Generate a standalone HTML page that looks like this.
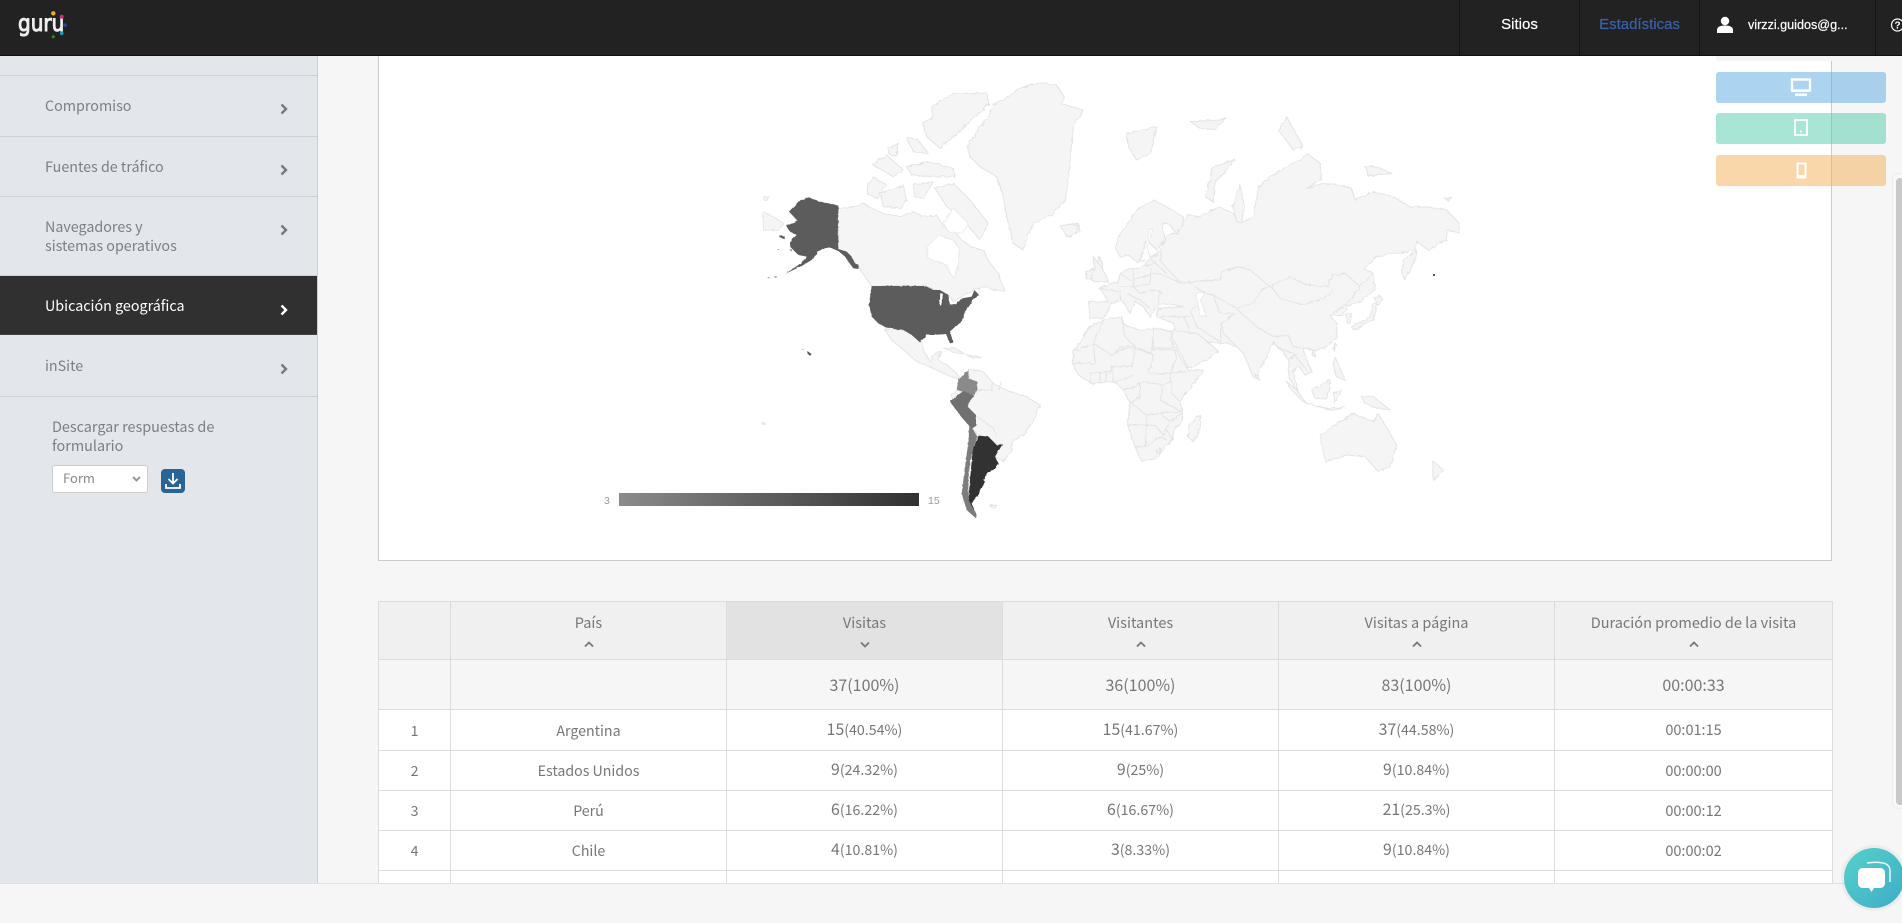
<!DOCTYPE html>
<html lang="es"><head><meta charset="utf-8"><title>Guru - Estadísticas</title>
<style>
*{box-sizing:border-box}
html,body{margin:0;padding:0;width:1902px;height:923px;overflow:hidden;background:#f6f6f6;font-family:"Noto Sans CJK SC","Liberation Sans",sans-serif;color:#777}
.abs{position:absolute}
#hdr{left:0;top:0;width:1902px;height:56px;background:#222;border-bottom:1px solid #111;font-family:"Liberation Sans",sans-serif;z-index:5}
#hdr .dv{position:absolute;top:0;height:55px;width:1px;background:#151515}
#hdr .t{position:absolute;top:0;line-height:50px;font-size:15px;text-align:center;-webkit-text-stroke:.2px}
#side{left:0;top:56px;width:318px;height:827px;background:#e3e6eb;border-right:1px solid #cdcfd2}
.ln{position:absolute;left:0;width:317px;height:1px;background:#cdd0d4}
.mi{position:absolute;left:45px;font-size:14.3px;line-height:19px;color:#7b7f86;white-space:nowrap}
.chev{position:absolute;left:280px;width:8px;height:12px}
#card{left:378px;top:50px;width:1454px;height:511px;background:#fff;border:1px solid #cbcbcb}
.dv-btn{position:absolute;left:1716px;width:170px;height:31px;border-radius:3px;z-index:3}
#tblwrap{left:378px;top:601px;width:1455px;height:282px;overflow:hidden}
table{border-collapse:collapse;table-layout:fixed;width:1454px;text-align:center}
td,th{border:1px solid #dcdcdc;padding:0;font-weight:400;color:#777;overflow:hidden;white-space:nowrap}
th{background:#f0f0f0;font-size:14.5px;height:58px;vertical-align:top;line-height:19px;padding-top:11px}
th.on{background:#e2e2e2}
th svg{display:block;margin:8.5px auto 0}
tr.tot td{background:#f6f6f6;height:50px;font-size:16px;padding-bottom:1px}
tr.r td{background:#fff;height:40px;font-size:14.2px;line-height:20px}
tr.r1 td{height:41px}
tr.r td:nth-child(1),tr.r td:nth-child(2){padding-top:1px}
tr.r td:nth-child(3),tr.r td:nth-child(4),tr.r td:nth-child(5){padding-bottom:2px}
tr.r b{font-weight:400;font-size:15.8px}
tr.r small{font-size:14.2px}
tr.r td.d{font-size:14.5px}
#foot{left:0;top:883px;width:1902px;height:40px;background:#f6f6f6;border-top:1px solid #e1e1e1}
</style></head><body>

<div id="side" class="abs"></div>
<div class="ln" style="top:75px"></div>
<div class="ln" style="top:136px"></div>
<div class="ln" style="top:196px"></div>
<div class="ln" style="top:275px"></div>
<div class="abs" style="left:0;top:276px;width:317px;height:59px;background:#303030;border-bottom:1px solid #444"></div>
<div class="ln" style="top:396px"></div>
<div class="mi" style="top:96px">Compromiso</div>
<div class="mi" style="top:157px">Fuentes de tráfico</div>
<div class="mi" style="top:217px">Navegadores y<br>sistemas operativos</div>
<div class="mi" style="top:296px;color:#fff">Ubicación geográfica</div>
<div class="mi" style="top:356px">inSite</div>
<div class="mi" style="top:417px;left:52px;line-height:19px;font-size:14.4px">Descargar respuestas de<br>formulario</div>
<svg class="chev" style="top:103px" viewBox="0 0 8 12"><path d="M1.5 1.5L6 6l-4.500 4.500" fill="none" stroke="#767a80" stroke-width="2.400"/></svg>
<svg class="chev" style="top:164px" viewBox="0 0 8 12"><path d="M1.500 1.500L6 6l-4.500 4.500" fill="none" stroke="#767a80" stroke-width="2.400"/></svg>
<svg class="chev" style="top:224px" viewBox="0 0 8 12"><path d="M1.500 1.500L6 6l-4.500 4.500" fill="none" stroke="#767a80" stroke-width="2.400"/></svg>
<svg class="chev" style="top:304px" viewBox="0 0 8 12"><path d="M1.500 1.500L6 6l-4.500 4.500" fill="none" stroke="#fff" stroke-width="2.400"/></svg>
<svg class="chev" style="top:363px" viewBox="0 0 8 12"><path d="M1.500 1.500L6 6l-4.500 4.500" fill="none" stroke="#767a80" stroke-width="2.400"/></svg>
<div class="abs" style="left:52px;top:465px;width:96px;height:28px;background:#fff;border:1px solid #ccc;border-radius:3px;font-size:13px;line-height:24px;padding-left:10px;color:#888">Form
<svg class="abs" style="left:79px;top:10px" width="9" height="6" viewBox="0 0 9 6"><path d="M1 1l3.500 3.500L8 1" fill="none" stroke="#999" stroke-width="2"/></svg></div>
<div class="abs" style="left:161px;top:469px;width:24px;height:24px;background:#2a6496;border-radius:4px">
<svg width="24" height="24" viewBox="0 0 24 24"><path d="M12 4v10M7.500 10l4.500 4.500 4.500-4.500M5 15v4h14v-4" fill="none" stroke="#fff" stroke-width="1.800"/></svg></div>

<div id="card" class="abs"></div>

<svg class="abs" style="left:0;top:0;z-index:1" width="1902" height="600" viewBox="0 0 1902 600">
<defs>
<filter id="rough" x="0" y="0" width="100%" height="100%" filterUnits="objectBoundingBox"><feTurbulence type="fractalNoise" baseFrequency=".22" numOctaves="2" seed="4" result="n"/><feDisplacementMap in="SourceGraphic" in2="n" scale="3.5"/></filter>
<filter id="rough2" x="0" y="0" width="100%" height="100%"><feTurbulence type="fractalNoise" baseFrequency=".3" numOctaves="2" seed="7" result="n"/><feDisplacementMap in="SourceGraphic" in2="n" scale="1.8"/></filter>
</defs>
<g filter="url(#rough)" fill="#f5f5f5" stroke="#e3e3e3" stroke-width="3" stroke-linejoin="round">
<!-- North America light -->
<g transform="translate(740,60) scale(.33333)">
<path d="M682 260L720 200L745 170L760 135L800 115L830 90L865 75L900 68L950 75L975 115L960 130L1030 150L1015 175L1000 200L990 300L985 360L975 420L940 460L880 490L865 520L850 570L820 550L800 470L790 410L770 350L720 320L690 290Z"/>
<path d="M960 495L1015 490L1020 515L985 530Z"/>
<path d="M575 140L640 100L740 100L748 130L690 185L640 230L600 265L560 230L548 190L580 170Z"/>
<path d="M385 370L400 352L440 375L410 415L380 400Z"/>
<path d="M420 400L490 375L500 420L480 445L430 440Z"/>
<path d="M398 315L440 285L490 330L460 350Z"/>
<path d="M500 235L530 235L565 280L520 275Z"/>
<path d="M500 320L565 305L640 325L645 350L580 350L515 345Z"/>
<path d="M445 265L475 250L470 285L450 285Z"/>
<path d="M585 385L640 370L690 420L745 490L720 540L670 480L620 440Z"/>
<path d="M520 375L580 365L550 415L525 410Z"/>
<path d="M295 445L350 440L372 430L395 445L440 465L480 470L520 455L550 470L590 465L610 500L640 510L665 540L700 565L730 570L750 610L775 640L795 695L760 690L740 680L700 690L640 725L625 705L590 690L555 678L395 678L360 630L340 600L320 575L295 570Z"/>
<path d="M560 560L600 525L640 540L658 565L655 620L645 655L630 640L620 615L565 595Z" fill="#fff" stroke="#e8e8e8"/>
<path d="M610 490L640 445L685 490L665 520L625 515Z" fill="#fff" stroke="#e8e8e8"/>
<path d="M70 455L100 470L130 490L115 510L70 510Z"/>
<path d="M72 410L85 410L82 420L72 420Z"/>
<path d="M1040 640L1065 625L1080 590L1090 640L1105 665L1070 665L1060 650Z"/>
</g>
<!-- Mexico, central america, SA light -->
<g transform="translate(580,340) scale(.33333)">
<path d="M912 -35L960 -30L1000 -20L1025 5L1030 30L1050 65L1065 40L1085 35L1075 60L1105 78L1130 100L1140 115L1130 115L1100 105L1060 85L1010 65L965 25L935 0Z"/>
<path d="M1090 22L1125 25L1155 42L1125 38Z"/>
<path d="M1160 45L1200 50L1180 54Z"/>
<path d="M1165 88L1210 95L1240 130L1290 155L1340 170L1380 195L1360 245L1330 285L1300 300L1295 330L1270 365L1245 350L1268 312L1250 315L1225 290L1195 287L1175 260L1185 225L1160 200L1175 168L1190 150L1190 125L1165 115Z"/>
<path d="M1132 150L1115 165L1120 180L1150 155Z"/>
<path d="M1228 495L1248 495L1240 505Z"/>
<path d="M545 248L555 248L550 254Z"/>
<path d="M1150 205L1185 225M1190 150L1240 150M1240 130L1235 150M1265 125L1255 150M1185 225L1240 265L1250 290" fill="none"/>
</g>
<!-- Eurasia & Africa -->
<g transform="translate(1040,60) scale(.33333)">
<path d="M150 775L145 725L205 725L180 685L205 672L235 665L240 640L270 625L300 625L330 600L358 575L385 520L410 520L430 490L445 465L480 470L535 440L580 460L600 490L640 470L655 380L690 350L740 320L780 300L800 280L840 310L845 360L800 385L850 370L900 375L935 385L945 420L1000 395L1060 410L1110 440L1160 440L1220 450L1258 490L1258 520L1220 510L1220 540L1165 570L1130 545L1125 570L1085 580L1050 580L1010 590L970 625L1000 640L1005 690L960 725L930 735L905 765L870 765L890 790L890 830L860 860L820 875L810 865L790 865L800 900L815 935L795 945L775 915L760 935L775 1000L745 950L745 900L725 870L715 865L700 845L680 890L650 950L660 960L640 950L610 880L590 860L560 850L540 850L500 845L520 860L535 875L500 900L445 925L395 830L405 810L400 790L350 770L355 745L430 740L370 730L345 745L330 770L310 740L285 725L270 760L245 720L215 730L190 775Z"/>
<path d="M225 560L235 530L270 480L290 450L340 420L370 435L430 470L430 490L410 520L385 490L365 490L375 540L350 570L320 540L295 610L265 585L240 590Z"/>
<path d="M300 605L330 505L340 510L320 560L330 590L358 575L320 600Z" fill="#fff" stroke="#e8e8e8"/>
<path d="M470 700L495 695L480 720L500 770L480 770Z" fill="#fff" stroke="#e8e8e8"/>
<path d="M60 495L115 495L110 520L80 530Z"/>
<path d="M160 590L190 630L205 665L165 665L140 650L165 625Z"/>
<path d="M138 635L160 625L155 655L138 655Z"/>
<path d="M258 220L350 200L330 280L290 300L265 260Z"/>
<path d="M585 300L520 320L495 410L520 425L525 370Z"/>
<path d="M450 185L520 180L560 175L520 210L480 205Z"/>
<path d="M740 170L790 260L760 270L715 210Z"/>
<path d="M975 320L1010 320L1055 340L985 348Z"/>
<path d="M600 375L612 440L605 490L590 485L578 440Z"/>
<path d="M1215 415L1235 412L1225 422Z"/>
<path d="M885 850L890 855L880 870Z"/>
<path d="M1085 640L1090 600L1130 570L1125 600L1095 660Z"/>
<path d="M935 800L990 770L1000 730L1025 715L1010 740L1000 780L940 810Z"/>
<path d="M1005 715L1020 708L1030 720L1010 735Z"/>
<path d="M918 760L935 760L930 790L920 790Z"/>
<path d="M100 875L130 830L150 800L190 780L245 770L250 790L265 800L300 810L340 805L395 815L392 835L420 890L445 930L490 930L480 945L435 1005L420 1025L428 1060L425 1085L400 1110L398 1140L377 1160L350 1195L305 1205L285 1160L263 1095L270 1030L250 990L225 965L155 970L115 945L98 915Z"/>
<path d="M480 1065L483 1100L460 1145L443 1130L450 1090Z"/>
<path d="M840 1125L900 1085L940 1060L975 1075L1000 1085L1015 1060L1070 1155L1050 1220L1015 1235L975 1190L920 1185L855 1205Z"/>
<path d="M740 965L770 990L800 1030L790 1025L750 985Z"/>
<path d="M800 1030L860 1045L915 1042L880 1052Z"/>
<path d="M815 990L870 960L870 985L860 1015L825 1015Z"/>
<path d="M880 1000L905 990L885 1030Z"/>
<path d="M965 1010L1000 1010L1050 1050L1010 1045L975 1030Z"/>
<path d="M885 890L915 960L890 950L880 915Z"/>
<path d="M1180 1205L1210 1230L1180 1260Z"/>
<path d="M820 870L825 890L815 885Z"/>
<path d="M645 945L655 945L655 960Z"/>
<path fill="none" d="M365 575L360 600L375 620L425 670L460 665L540 660L545 635L595 620L630 630L690 680L750 650L800 675L860 680L880 645L915 640L960 680L1000 640"/>
<path fill="none" d="M695 680L720 715L790 735L860 710L880 690"/>
<path fill="none" d="M465 680L495 700L520 705L590 745L640 730L665 690L695 680"/>
<path fill="none" d="M590 745L610 765L650 800L700 830L745 825L760 860L820 870"/>
<path fill="none" d="M450 750L470 800L540 845L545 790L585 760M520 705L540 760L585 760"/>
<path fill="none" d="M395 810L470 820L510 850M430 770L450 810M545 790L550 820L590 860"/>
<path fill="none" d="M700 850L730 870L760 880L800 930M745 900L770 880M880 760L925 730L960 680"/>
<path fill="none" d="M240 640L270 660L310 650L350 640L380 650L425 670M280 625L280 680L330 670L335 625M240 680L280 680L300 700L340 690L370 700M260 700L300 720L330 745M360 690L355 730M175 685L235 695M240 690L240 720"/>
<path fill="none" d="M335 600L380 640M310 620L350 605M325 545L350 570"/>
<path fill="none" d="M355 745L430 740M360 770L450 770M470 740L450 750"/>
<path fill="none" d="M190 780L160 850L100 875M160 850L215 885L245 860L285 860M245 770L255 830L285 860L335 880L340 805M340 865L400 865L392 835M285 860L275 920M160 850L165 910L100 910"/>
</g>
<g transform="translate(1000,340) scale(.33333)" fill="none">
<path d="M370 25L405 25L395 80L340 80M340 45L370 25M405 25L460 45L445 100M460 0L460 30L525 30L530 55L510 100L450 100M335 80L340 125L370 120L400 105M270 100L330 95L340 80M270 130L275 100M300 95L300 128M320 95L320 125M370 150L405 140L430 125L490 135L515 125L510 100M490 135L480 180L545 215M515 125L515 160L540 185L560 155M510 100L560 95M390 190L420 170L420 130M385 255L440 255L440 225L395 190M440 225L480 220L510 215L545 215M440 255L435 320L405 320M435 320L480 290L500 300M440 255L465 255L490 285L510 245L480 220M510 245L548 220M500 270L518 300M470 330L482 325L480 338L470 338Z"/>
</g>
</g>
<!-- Dark countries -->
<g filter="url(#rough2)">
<g transform="translate(740,60) scale(.33333)" fill="#5c5c5c">
<path d="M205 412L240 425L295 437L295 567L320 575L335 590L345 610L357 615L355 627L340 625L325 605L315 590L295 573L270 563L250 565L235 575L215 600L190 615L160 630L135 642L165 622L195 600L200 590L175 585L150 560L150 545L170 525L150 515L138 497L165 488L172 482L147 455L175 425Z"/>
<path d="M118 526L135 530L133 536L118 532Z"/><path d="M148 568L155 568L155 574Z"/><path d="M82 652L88 652L88 656Z"/><path d="M98 650L112 650L108 653Z"/><path d="M112 565L116 568L113 570Z"/>
<path d="M395 678L555 678L580 690L600 690L625 705L630 735L650 730L665 715L695 710L703 690L717 705L700 715L690 735L675 755L665 785L640 805L630 815L640 848L630 850L618 822L580 825L560 825L540 847L515 825L490 810L470 808L440 803L415 790L395 770L387 735Z"/>
<path d="M601 700L608 700L604 735L598 735Z" fill="#fff"/>
</g>
<g transform="translate(580,340) scale(.33333)">
<path fill="#5c5c5c" d="M682 33L695 42L690 48L682 40Z"/><path fill="#5c5c5c" d="M666 28L670 28L670 31Z"/>
<path fill="#8a8a8a" d="M1165 88L1135 120L1132 150L1150 155L1175 172L1192 150L1192 125L1165 115Z"/>
<path fill="#7c7c7c" d="M1168 250L1192 290L1178 330L1170 370L1165 420L1165 480L1190 525L1188 535L1160 510L1145 460L1155 380L1166 300Z"/>
<path fill="#6f6f6f" d="M1112 182L1150 153L1182 168L1168 185L1163 200L1188 225L1188 258L1175 266L1145 232L1112 188Z"/>
<path fill="#303030" d="M1195 287L1225 290L1250 315L1268 312L1245 350L1255 370L1240 390L1222 398L1210 420L1215 425L1200 455L1175 490L1190 525L1208 528L1190 525L1165 480L1170 420L1178 330Z"/>
</g>
</g>
<rect x="1433" y="274" width="2" height="2" fill="#555"/>
<defs><linearGradient id="lg"><stop offset="0" stop-color="#8b8b8b"/><stop offset="1" stop-color="#303030"/></linearGradient></defs>
<rect x="619" y="493" width="300" height="13" fill="url(#lg)"/>
<text x="604" y="504" font-family="Liberation Sans" font-size="10.500" fill="#999">3</text>
<text x="928" y="504" font-family="Liberation Sans" font-size="10.500" fill="#999">15</text>
</svg>

<!-- device buttons -->
<div class="abs" style="left:1716px;top:50px;width:170px;height:11px;background:#f3f6f5;border-radius:3px;z-index:3"></div>
<div class="dv-btn" style="top:72px;background:rgba(90,170,225,.5)"></div>
<div class="dv-btn" style="top:113px;background:rgba(75,200,165,.48)"></div>
<div class="dv-btn" style="top:155px;background:rgba(245,170,80,.48)"></div>
<svg class="abs" style="left:1790px;top:78px;z-index:4" width="22" height="18" viewBox="0 0 22 18"><rect x="2" y="1.500" width="18" height="11" fill="none" stroke="#fff" stroke-width="2.400"/><path d="M2 12h18v2H2zM5 15.500h12V18H5z" fill="#fff"/></svg>
<svg class="abs" style="left:1794px;top:119px;z-index:4" width="14" height="17" viewBox="0 0 14 17"><rect x="1" y="1" width="12" height="15" fill="none" stroke="#fff" stroke-width="1.800"/><circle cx="7" cy="12.500" r="1" fill="#fff"/></svg>
<svg class="abs" style="left:1796px;top:162px;z-index:4" width="11" height="17" viewBox="0 0 11 17"><rect x="1.500" y="1.500" width="8" height="14" fill="none" stroke="#fff" stroke-width="2"/><rect x="1" y="13" width="9" height="3" fill="#fff"/></svg>

<!-- table -->
<div id="tblwrap" class="abs" style="z-index:2">
<table><colgroup><col style="width:72px"><col style="width:276px"><col style="width:276px"><col style="width:276px"><col style="width:276px"><col style="width:278px"></colgroup>
<tr><th></th>
<th>País<svg width="10" height="7" viewBox="0 0 10 7"><path d="M1 5.500l4-4 4 4" fill="none" stroke="#777" stroke-width="1.800"/></svg></th>
<th class="on">Visitas<svg width="10" height="7" viewBox="0 0 10 7"><path d="M1 1.500l4 4 4-4" fill="none" stroke="#777" stroke-width="1.800"/></svg></th>
<th>Visitantes<svg width="10" height="7" viewBox="0 0 10 7"><path d="M1 5.500l4-4 4 4" fill="none" stroke="#777" stroke-width="1.800"/></svg></th>
<th>Visitas a página<svg width="10" height="7" viewBox="0 0 10 7"><path d="M1 5.500l4-4 4 4" fill="none" stroke="#777" stroke-width="1.800"/></svg></th>
<th>Duración promedio de la visita<svg width="10" height="7" viewBox="0 0 10 7"><path d="M1 5.500l4-4 4 4" fill="none" stroke="#777" stroke-width="1.800"/></svg></th></tr>
<tr class="tot"><td></td><td></td><td>37(100%)</td><td>36(100%)</td><td>83(100%)</td><td>00:00:33</td></tr>
<tr class="r r1"><td>1</td><td>Argentina</td><td><b>15</b><small>(40.54%)</small></td><td><b>15</b><small>(41.67%)</small></td><td><b>37</b><small>(44.58%)</small></td><td class="d">00:01:15</td></tr>
<tr class="r"><td>2</td><td>Estados Unidos</td><td><b>9</b><small>(24.32%)</small></td><td><b>9</b><small>(25%)</small></td><td><b>9</b><small>(10.84%)</small></td><td class="d">00:00:00</td></tr>
<tr class="r"><td>3</td><td>Perú</td><td><b>6</b><small>(16.22%)</small></td><td><b>6</b><small>(16.67%)</small></td><td><b>21</b><small>(25.3%)</small></td><td class="d">00:00:12</td></tr>
<tr class="r"><td>4</td><td>Chile</td><td><b>4</b><small>(10.81%)</small></td><td><b>3</b><small>(8.33%)</small></td><td><b>9</b><small>(10.84%)</small></td><td class="d">00:00:02</td></tr>
<tr class="r"><td>&nbsp;</td><td></td><td></td><td></td><td></td><td></td></tr>
</table></div>
<div id="foot" class="abs" style="z-index:2"></div>

<!-- scrollbar -->
<div class="abs" style="left:1892px;top:173px;width:14px;height:636px;border:1px solid #ececec;border-radius:7px;background:#f8f8f8;z-index:2"></div>
<div class="abs" style="left:1896px;top:178px;width:8px;height:627px;background:#c9c9c9;border-radius:4px;z-index:2"></div>

<!-- chat -->
<svg class="abs" style="left:1834px;top:838px;z-index:6" width="68" height="85" viewBox="0 0 68 85">
<defs><linearGradient id="cg" x1="0" y1="0" x2="1" y2="1"><stop offset="0" stop-color="#55d2c8"/><stop offset="1" stop-color="#3eacc8"/></linearGradient></defs>
<circle cx="40" cy="40" r="33" fill="#000" opacity=".04"/>
<circle cx="40" cy="40" r="30" fill="url(#cg)"/>
<path d="M33 25c6-1 12-1 16 0 5 1 7 4 7 8v11" fill="none" stroke="#fff" stroke-width="1.500" opacity=".9"/>
<path d="M29 30h17c3 0 5 2 5 5v10c0 3-2 5-5 5h-6l-2.500 4-2.500-4h-6c-3 0-5-2-5-5V35c0-3 2-5 5-5z" fill="#fff"/>
</svg>

<!-- header -->
<div id="hdr" class="abs">
<div class="abs" style="left:18px;top:10px;font-size:23px;color:#eee;line-height:28px;font-family:'DejaVu Sans',sans-serif;transform:scaleX(.87);transform-origin:0 0;-webkit-text-stroke:1px #eee">guru</div>
<svg class="abs" style="left:0;top:0" width="80" height="50"><circle cx="53.300" cy="13.300" r="2.200" fill="#f0ac1e"/><circle cx="61.700" cy="16.700" r="2" fill="#d62a82"/><circle cx="65" cy="25" r="1.800" fill="#1d4fa0"/><circle cx="61.700" cy="33.300" r="1.800" fill="#10a5c0"/><circle cx="53.300" cy="36.700" r="1.500" fill="#3c8a30"/></svg>
<div class="dv" style="left:1459px"></div><div class="dv" style="left:1579px"></div><div class="dv" style="left:1699px"></div><div class="dv" style="left:1875px"></div>
<div class="t" style="left:1460px;width:119px;color:#fff">Sitios</div>
<div class="t" style="left:1580px;width:119px;color:#3a62ab">Estadísticas</div>
<svg class="abs" style="left:1716px;top:16px" width="18" height="18" viewBox="0 0 18 18"><circle cx="9" cy="5" r="4.200" fill="#fff"/><path d="M1 17v-3c0-3 3-4.500 8-4.500s8 1.500 8 4.500v3z" fill="#fff"/></svg>
<div class="abs" style="left:1748px;top:0;font-size:12.6px;line-height:51px;color:#fff;white-space:nowrap;-webkit-text-stroke:.2px">virzzi.guidos@g...</div>
<svg class="abs" style="left:1890px;top:17px" width="14" height="16" viewBox="0 0 14 16"><circle cx="7.500" cy="8" r="6" fill="none" stroke="#fff" stroke-width="1.200"/><text x="7.500" y="11.500" text-anchor="middle" font-family="Liberation Sans" font-size="10" font-weight="700" fill="#fff">?</text></svg>
</div>
</body></html>
